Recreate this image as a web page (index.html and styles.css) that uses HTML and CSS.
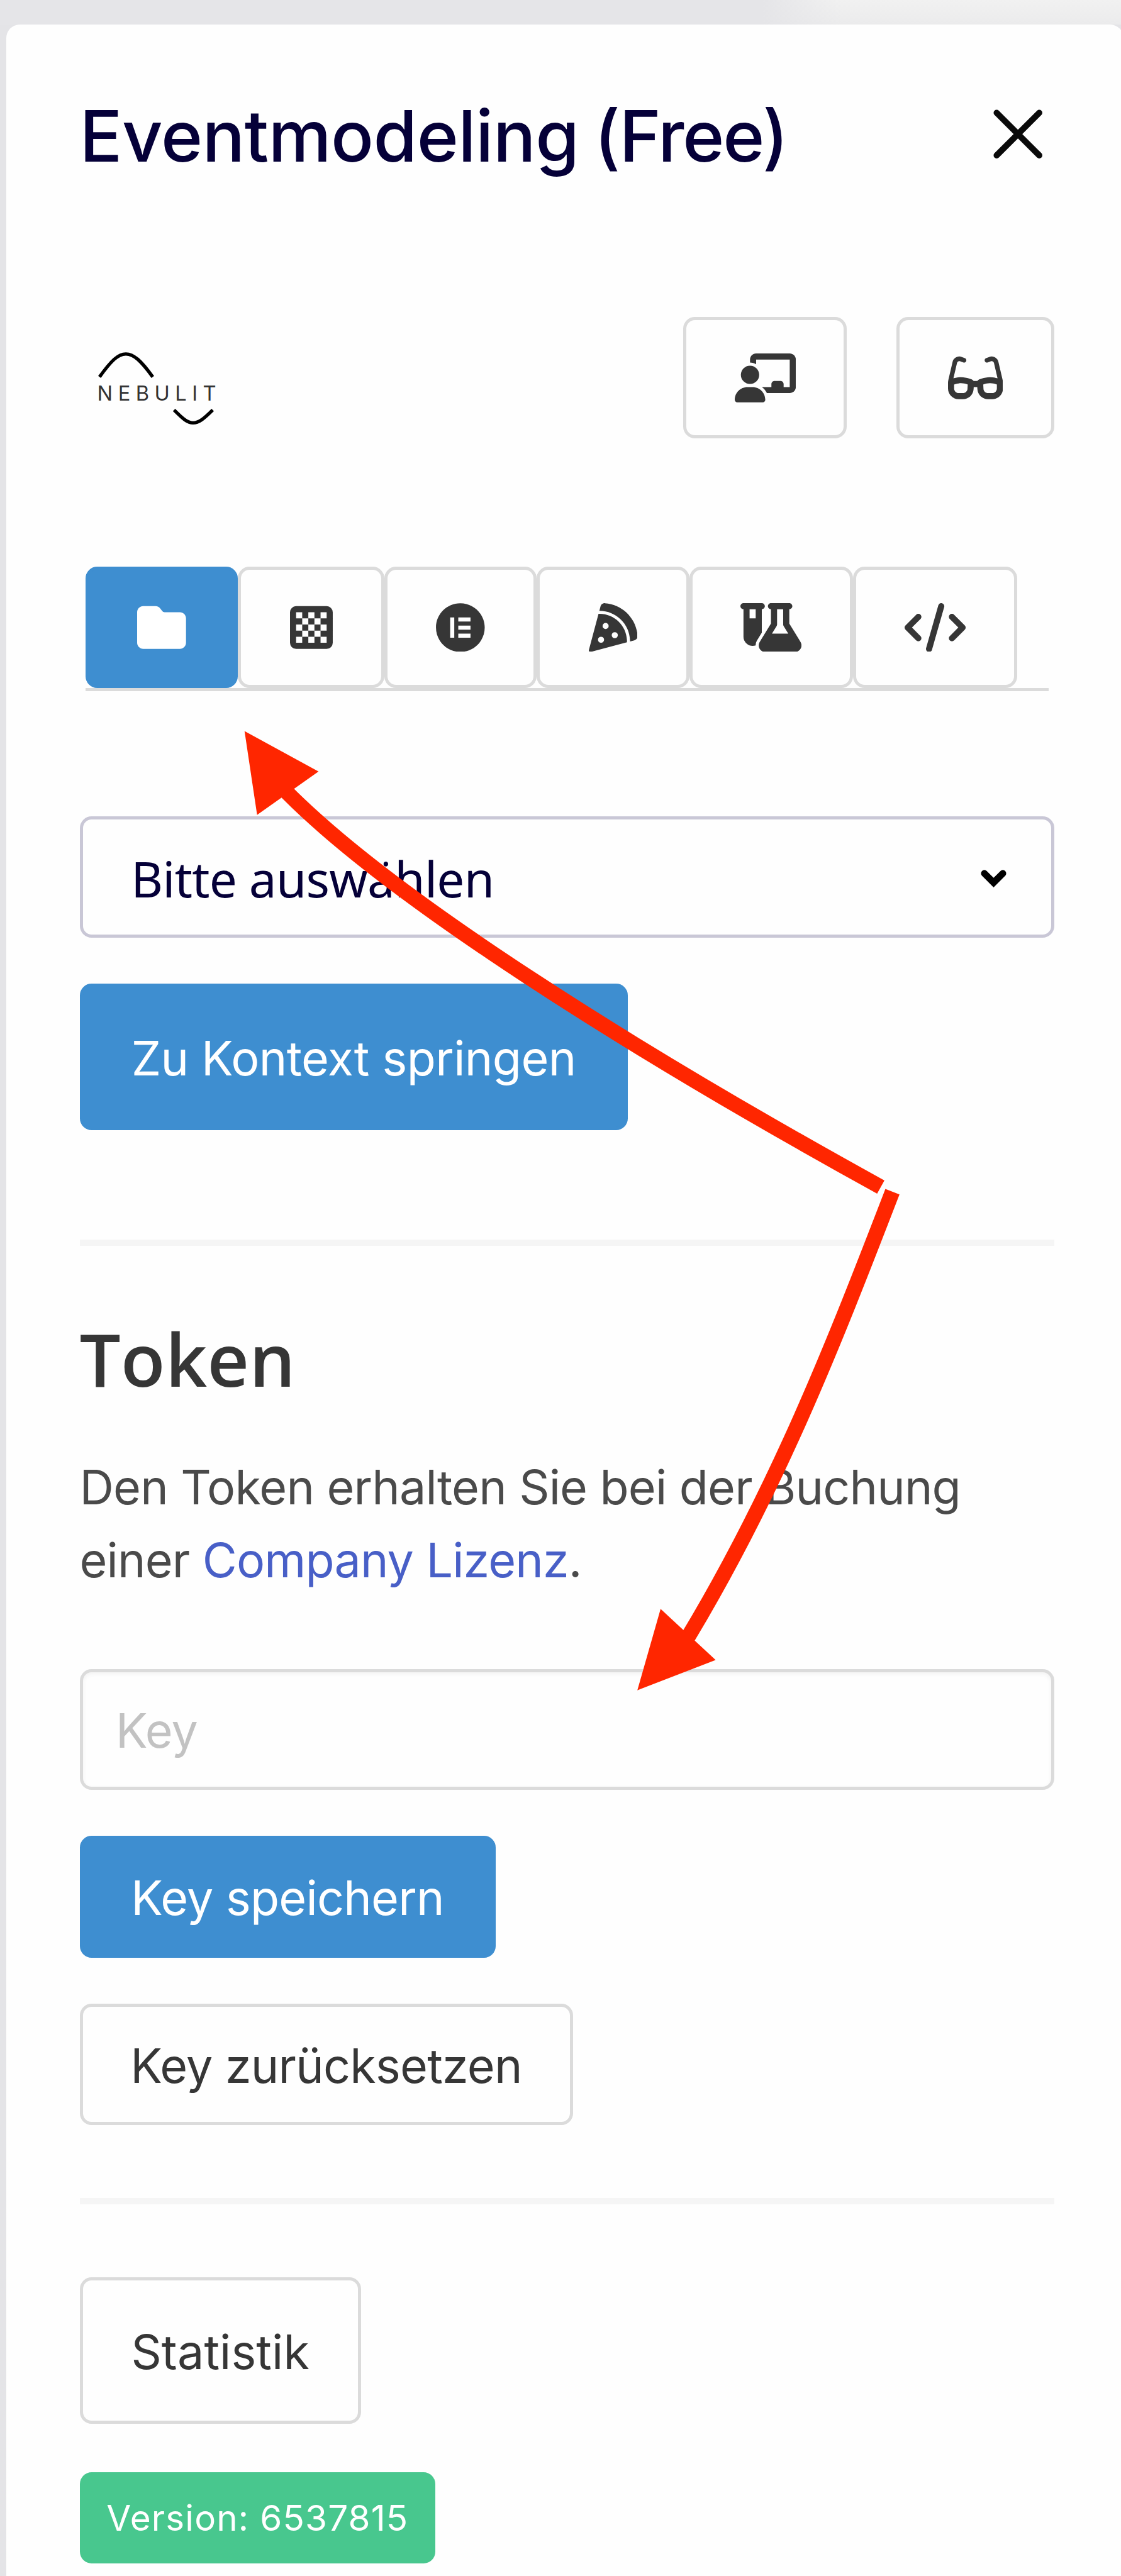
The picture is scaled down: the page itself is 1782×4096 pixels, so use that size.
FILE: index.html
```html
<!DOCTYPE html>
<html lang="de">
<head>
<meta charset="utf-8">
<title>Eventmodeling (Free)</title>
<link rel="stylesheet" href="styles.css">
</head>
<body>
<main class="panel">
  <header class="header">
    <h1 class="title">Eventmodeling <span class="plan">(Free)</span></h1>
    <svg class="close" viewBox="0 0 88 88"><path d="M6 6L82 82M82 6L6 82"/></svg>
  </header>

  <div class="toolbar">
    <svg class="logo" viewBox="0 0 280 217">
      <path d="M35 107C56 78 68 66 82 66S109 78 130 107"/>
      <path d="M168 166C184 182 192 189 202 189S221 182 237 166"/>
      <text x="31" y="149.3" textLength="212">NEBULIT</text>
    </svg>
    <div class="actions">
      <button class="button icon-button wide"><svg class="icon" viewBox="0 0 640 512"><path d="M160 64c0-35.300 28.700-64 64-64H576c35.300 0 64 28.700 64 64V352c0 35.300-28.700 64-64 64H336.800c-11.800-25.500-29.900-47.500-52.400-64H384V320c0-17.700 14.300-32 32-32h64c17.700 0 32 14.300 32 32v32h64V64L224 64v49.100C205.200 102.200 183.300 96 160 96V64zm0 64a96 96 0 1 1 0 192 96 96 0 1 1 0-192zM133.300 352h53.300C260.300 352 320 411.700 320 485.300c0 14.700-11.900 26.700-26.700 26.700H26.700C11.900 512 0 500.100 0 485.300C0 411.700 59.700 352 133.300 352z"/></svg></button>
      <button class="button icon-button"><svg class="icon" viewBox="0 0 576 512"><path d="M118.600 80c-11.500 0-21.400 7.900-24 19.100L57 260.300c20.500-6.200 48.300-12.300 78.700-12.300c32.300 0 61.800 6.900 82.800 13.500c10.600 3.300 19.300 6.700 25.400 9.200c3.100 1.300 5.500 2.400 7.300 3.200c5.800 2.900 13.400 8.700 16.500 14.100h40.600c3.100-5.300 7.700-9.800 13.500-12.700c1.800-.8 4.200-1.900 10.200-4.600c6.100-2.600 14.800-5.900 25.400-9.200c21-6.600 50.400-13.500 82.800-13.500c30.400 0 58.200 6.100 78.700 12.300L481.400 99.100c-2.600-11.200-12.600-19.100-24-19.100c-3.100 0-6.200 .6-9.200 1.800L416.900 94.300c-12.300 4.900-26.300-1.100-31.200-13.400s1.100-26.300 13.400-31.200l31.300-12.500c8.600-3.400 17.700-5.200 27-5.200c33.800 0 63.100 23.300 70.800 56.200l43.900 188c1.700 7.300 2.900 14.700 3.500 22.100c.3 1.900 .5 3.800 .5 5.700v64c0 61.900-50.100 112-112 112H419.700c-59.400 0-108.500-46.400-111.800-105.800L306.600 352H269.400l-1.200 22.200C264.900 433.600 215.800 480 156.300 480H112C50.100 480 0 429.900 0 368V304c0-1.900 .2-3.800 .5-5.700c.6-7.400 1.800-14.800 3.500-22.100l43.900-188C55.500 55.300 84.800 32 118.600 32c9.200 0 18.400 1.800 27 5.200l31.300 12.500c12.300 4.900 18.300 18.900 13.400 31.200s-18.900 18.300-31.200 13.400L127.800 81.800c-2.900-1.200-6-1.800-9.200-1.800zM64 325.400V368c0 26.500 21.500 48 48 48h44.300c25.500 0 46.500-19.900 47.900-45.300l2.500-45.600c-2.300-.8-4.900-1.700-7.500-2.500c-17.200-5.400-39.900-10.500-63.600-10.500c-23.700 0-46.200 5.100-63.200 10.500c-3.100 1-5.900 1.900-8.500 2.900zM512 368V325.400c-2.600-.9-5.500-1.900-8.500-2.900c-17-5.400-39.500-10.500-63.200-10.500c-23.700 0-46.400 5.100-63.600 10.500c-2.700 .8-5.200 1.700-7.500 2.500l2.500 45.600c1.400 25.400 22.500 45.300 47.900 45.300H464c26.500 0 48-21.500 48-48z"/></svg></button>
    </div>
  </div>

  <nav class="tabs">
    <button class="button tab primary"><svg class="icon" viewBox="0 0 512 512"><path d="M64 480H448c35.300 0 64-28.700 64-64V160c0-35.300-28.700-64-64-64H288c-10.100 0-19.600-4.700-25.600-12.800L243.200 57.600C231.100 41.500 212.100 32 192 32H64C28.700 32 0 60.700 0 96V416c0 35.300 28.700 64 64 64z"/></svg></button>
    <button class="button tab narrow"><svg class="icon" viewBox="0 0 448 512"><path fill-rule="evenodd" d="M64 32H384a64 64 0 0 1 64 64V416a64 64 0 0 1-64 64H64a64 64 0 0 1-64-64V96a64 64 0 0 1 64-64zM64 96v64h64V96zM192 96v64h64V96zM320 96v64h64V96zM128 160v64h64v-64zM256 160v64h64v-64zM64 224v64h64v-64zM192 224v64h64v-64zM320 224v64h64v-64zM128 288v64h64v-64zM256 288v64h64v-64zM64 352v64h64v-64zM192 352v64h64v-64zM320 352v64h64v-64z"/></svg></button>
    <button class="button tab"><svg class="icon" viewBox="0 0 512 512"><path fill-rule="evenodd" d="M.361 256C.361 397 114 511 255 511C397 511 511 397 511 256C511 116 397 2.050 255 2.050C114 2.050 .361 116 .361 256zM192 150V363H149V150H192zM234 150H362V193H234V150zM362 235V278H234V235H362zM234 320H362V363H234V320z"/></svg></button>
    <button class="button tab"><svg class="icon" viewBox="0 0 512 512"><path fill-rule="evenodd" d="M169.700 .9c-22.800-1.600-41.900 14-47.500 34.700L110.400 80c.5 0 1.100 0 1.600 0c176.700 0 320 143.300 320 320c0 .5 0 1.100 0 1.600l44.400-11.800c20.800-5.500 36.300-24.700 34.700-47.500C498.500 159.500 352.500 13.500 169.700 .9zM399.800 410.200c.1-3.400 .2-6.800 .2-10.200c0-159.100-128.900-288-288-288c-3.400 0-6.800 .1-10.200 .2L.5 491.900c-1.500 5.500 .1 11.400 4.100 15.400s9.900 5.600 15.400 4.100L399.800 410.200zM176 208a32 32 0 1 1 0 64 32 32 0 1 1 0-64zm64 128a32 32 0 1 1 64 0 32 32 0 1 1 -64 0zM96 384a32 32 0 1 1 64 0 32 32 0 1 1 -64 0z"/></svg></button>
    <button class="button tab wide"><svg class="icon" viewBox="0 0 640 512"><path fill-rule="evenodd" d="M175 389.400c-9.800 16-15 34.300-15 53.100c-10 3.500-20.800 5.500-32 5.500c-53 0-96-43-96-96V64C14.300 64 0 49.700 0 32S14.300 0 32 0H224c17.700 0 32 14.300 32 32s-14.300 32-32 32V309.900l-49 79.600zM96 64v96h64V64H96zM352 0H512c17.700 0 32 14.300 32 32s-14.300 32-32 32V214.900L629.700 406.200c6.700 10.900 10.300 23.500 10.300 36.400c0 38.300-31.100 69.400-69.400 69.400H261.400c-38.300 0-69.400-31.100-69.400-69.400c0-12.800 3.600-25.400 10.300-36.400L320 214.900V64c-17.700 0-32-14.300-32-32s14.300-32 32-32h32zm32 64V224c0 5.900-1.600 11.700-4.700 16.800L330.500 320h171l-48.800-79.200c-3.100-5-4.700-10.800-4.700-16.800V64H384z"/></svg></button>
    <button class="button tab wide"><svg class="icon" viewBox="0 0 640 512"><path d="M392.800 1.200c-17-4.900-34.700 5-39.600 22l-128 448c-4.900 17 5 34.700 22 39.600s34.700-5 39.600-22l128-448c4.900-17-5-34.700-22-39.600zm80.600 120.100c-12.500 12.500-12.500 32.800 0 45.300L562.700 256l-89.400 89.400c-12.500 12.500-12.500 32.800 0 45.300s32.800 12.500 45.300 0l112-112c12.500-12.500 12.500-32.800 0-45.300l-112-112c-12.500-12.500-32.800-12.500-45.300 0zm-306.700 0c-12.500-12.500-32.800-12.500-45.300 0l-112 112c-12.500 12.500-12.500 32.800 0 45.300l112 112c12.500 12.500 32.800 12.500 45.300 0s12.500-32.800 0-45.300L77.300 256l89.400-89.400c12.500-12.500 12.500-32.800 0-45.300z"/></svg></button>
  </nav>

  <div class="select">Bitte auswählen
    <svg class="chevron" viewBox="0 0 46 33"><path d="M6.500 7.500L23 24L39.500 7.500"/></svg>
  </div>
  <button class="button primary tall jump">Zu Kontext springen</button>

  <hr class="rule">

  <h2 class="heading">Token</h2>
  <p class="text">Den Token erhalten Sie bei der Buchung<br>einer <a class="link">Company Lizenz</a>.</p>

  <div class="input">Key</div>
  <button class="button primary save">Key speichern</button>
  <button class="button reset">Key zurücksetzen</button>

  <hr class="rule second">

  <button class="button tall stats">Statistik</button>
  <div class="tag">Version: 6537815</div>
</main>

<svg class="arrows" viewBox="0 0 2000 4598">
  <path class="shaft" d="M1571.400 2118.400C1121 1870 694 1600 508 1410"/>
  <path class="head" d="M436.300 1304.700L568.300 1376.700L458.700 1454.300z"/>
  <path class="shaft" d="M1592.200 2126.700C1488 2397 1386 2658 1226 2924"/>
  <path class="head" d="M1137.100 3016.500L1178.600 2871.100L1276.800 2962.500z"/>
</svg>
</body>
</html>
```
FILE: styles.css
```css
html {
  font-size: 8.91px;
}

* {
  box-sizing: border-box;
}

body {
  margin: 0;
  position: relative;
  height: 4096px;
  overflow: hidden;
  display: flow-root;
  background:
    linear-gradient(90deg, #e5e5e8 0, #e5e5e8 136rem, rgba(229, 229, 232, 0) 150rem) 0 0 / 100% 4.4rem no-repeat,
    linear-gradient(#f1f1f1, #ebebec) 0 0 / 100% 4.4rem no-repeat,
    #e4e4e7;
  font-family: Inter, sans-serif;
  font-size: 8.46rem;
  color: #363636;
}

.panel {
  margin: 4.33rem 0 0 1.15rem;
  width: 199.3rem;
  height: 460rem;
  padding: 13.94rem 0 0 13.05rem;
  border-radius: 2.4rem;
  background: #fefefe;
  display: flex;
  flex-direction: column;
  align-items: flex-start;
}

.header {
  width: 173.9rem;
  height: 12rem;
  display: flex;
  align-items: center;
  justify-content: space-between;
}

.title {
  margin: 0;
  font-size: 12.65rem;
  font-weight: 500;
  letter-spacing: -.065rem;
  word-spacing: -.6rem;
  line-height: 12rem;
  color: #050038;
  white-space: nowrap;
}

.plan {
  letter-spacing: -.24rem;
}

.close {
  width: 8.8rem;
  height: 8.8rem;
  margin: 0 2.1rem .6rem 0;
  fill: none;
  stroke: #0a0a0a;
  stroke-width: 11;
  stroke-linecap: round;
}

.toolbar {
  width: 173.9rem;
  margin-top: 26.3rem;
  display: flex;
  justify-content: space-between;
}

.logo {
  width: 28rem;
  height: 21.7rem;
  fill: none;
  stroke: #000;
  stroke-width: 6;
}

.logo text {
  font-family: Inter, sans-serif;
  font-size: 36.7px;
  font-weight: 400;
  fill: #333;
  stroke: none;
}

.actions {
  display: flex;
  gap: 8.78rem;
}

.button {
  height: 21.7rem;
  padding: .4rem 0 0;
  border: 5px solid #dbdbdb;
  border-radius: 2.1rem;
  background: #fefefe;
  color: #363636;
  font: inherit;
  letter-spacing: -.085rem;
  display: flex;
  align-items: center;
  justify-content: center;
  flex: none;
  white-space: nowrap;
}

.icon-button {
  width: 28.2rem;
  padding: 0;
}

.tab {
  width: 27.2rem;
  padding: 0;
}

.narrow {
  width: 26.1rem;
}

.wide {
  width: 29.25rem;
}

.primary {
  border-color: #3e8ed0;
  background: #3e8ed0;
  color: #fff;
}

.icon {
  display: block;
  height: 8.72rem;
  fill: currentColor;
}

.tabs {
  width: 171.8rem;
  margin: 22.83rem 0 0 1.07rem;
  border-bottom: 5px solid #dbdbdb;
  display: flex;
}

.select {
  width: 173.9rem;
  height: 21.7rem;
  margin-top: 22.3rem;
  padding: .4rem 8rem 0 8.6rem;
  border: 5px solid #c9c7d6;
  border-radius: 2.1rem;
  display: flex;
  align-items: center;
  justify-content: space-between;
  font-family: "Noto Sans", sans-serif;
  font-size: 8.78rem;
  letter-spacing: -.08rem;
  color: #050038;
}

.chevron {
  width: 4.6rem;
  height: 3.3rem;
  fill: none;
  stroke: #000;
  stroke-width: 12;
  stroke-linecap: round;
}

.tall {
  height: 26.1rem;
}

.jump {
  width: 97.8rem;
  margin-top: 8.2rem;
  letter-spacing: -.065rem;
}

.rule {
  width: 173.9rem;
  height: 1.05rem;
  margin: 19.6rem 0 0;
  border: 0;
  background: #f5f5f5;
}

.heading {
  margin: 12.7rem 0 0;
  font-family: "Open Sans", "Noto Sans", sans-serif;
  font-size: 12.96rem;
  font-weight: 600;
  letter-spacing: .04rem;
  line-height: 15rem;
}

.text {
  margin: 8.9rem 0 0;
  line-height: 13.07rem;
  letter-spacing: -.094rem;
  color: #4a4a4a;
  white-space: nowrap;
}

.link {
  color: #485fc7;
}

.input {
  width: 173.9rem;
  height: 21.6rem;
  margin-top: 12.8rem;
  padding: .3rem 5.9rem 0;
  border: 5px solid #dbdbdb;
  border-radius: 2.1rem;
  box-shadow: inset 0 .3rem .8rem rgba(10, 10, 10, .05);
  letter-spacing: -.1rem;
  color: #c2c2c2;
  display: flex;
  align-items: center;
}

.save {
  width: 74.2rem;
  margin-top: 8.2rem;
}

.reset {
  width: 88rem;
  margin-top: 8.2rem;
}

.second {
  margin-top: 13.06rem;
}

.stats {
  width: 50.2rem;
  margin-top: 13.06rem;
  letter-spacing: .01rem;
}

.tag {
  width: 63.5rem;
  height: 16.3rem;
  margin-top: 8.7rem;
  border-radius: 2.1rem;
  background: #48c78e;
  color: #fff;
  font-size: 6.35rem;
  letter-spacing: .13rem;
  display: flex;
  align-items: center;
  justify-content: center;
  white-space: nowrap;
}

.arrows {
  position: absolute;
  left: 0;
  top: 0;
  width: 200rem;
  height: 459.8rem;
}

.shaft {
  fill: none;
  stroke: #ff2600;
  stroke-width: 27;
}

.head {
  fill: #ff2600;
}
```
